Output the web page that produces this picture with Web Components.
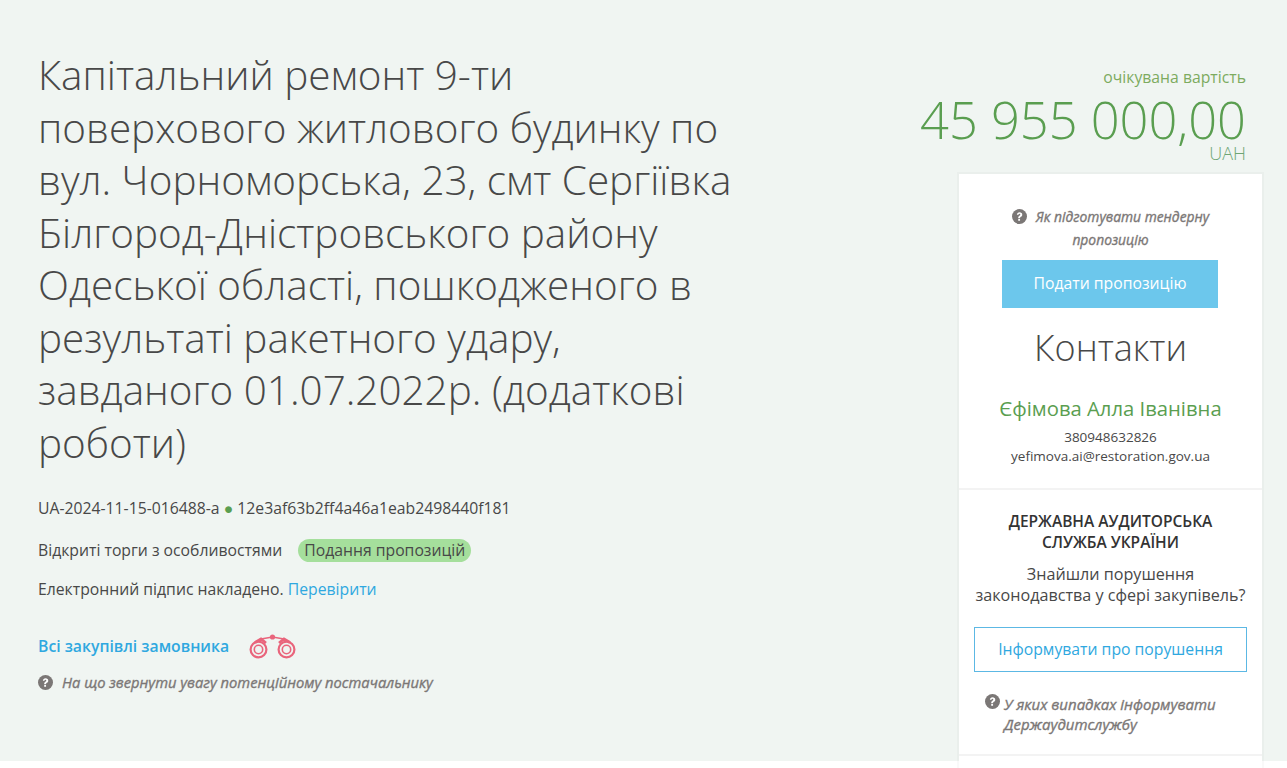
<!DOCTYPE html>
<html lang="uk">
<head>
<meta charset="utf-8">
<title>Тендер</title>
<style>
    html, body {
        margin: 0;
        height: 768px;
        overflow: hidden;
        background: #fff;
        font-family: "Open Sans", "Noto Sans", sans-serif;
        color: #484848;
    }
</style>
</head>
<body>
<tender-page>
    <tender-summary slot="left"></tender-summary>
    <price-box slot="right" amount="45 955 000,00" currency="UAH"></price-box>
    <side-card slot="right"></side-card>
</tender-page>

<script>
// question mark icon, used by every hint
const HELP_ICON = `<svg viewBox="0 0 24 24" width="15" height="15" aria-hidden="true"><circle cx="12" cy="12" r="12" fill="currentColor"/><path d="M7.800 9.300C8 6.800 9.700 5.300 12.100 5.300c2.500 0 4.300 1.500 4.300 3.700 0 1.500-.8 2.500-2.100 3.300-1.100.7-1.400 1.200-1.400 2.300h-3c-.1-1.900.5-3 1.900-3.900 1-.7 1.500-1.100 1.500-1.800 0-.8-.6-1.300-1.400-1.300-1 0-1.400.6-1.500 1.700z" fill="#fff"/><rect x="9.900" y="15.800" width="3" height="3" rx=".5" fill="#fff"/></svg>`;

class HelpHint extends HTMLElement {
    constructor() {
        super();
        this.attachShadow({ mode: 'open' });
        this.shadowRoot.innerHTML = `
        <style>
            :host {
                display: block;
                font-size: var(--hint-size, 14.72px);
                font-style: italic;
                font-weight: 400;
                -webkit-text-stroke: 0.35px currentColor;
                color: #7b7776;
                line-height: var(--hint-line, 24px);
            }
            .icon {
                display: inline-block;
                vertical-align: -2px;
                line-height: 0;
                margin-right: 9px;
            }
            /* icon stays on its own, text hangs next to it */
            :host([hanging]) {
                display: flex;
                line-height: 20px;
            }
            :host([hanging]) .icon { margin: 0 4px 0 0; height: 15px; }
        </style>
        <span class="icon">${HELP_ICON}</span><span><slot></slot></span>`;
    }
}
customElements.define('help-hint', HelpHint);

class TenderPage extends HTMLElement {
    constructor() {
        super();
        this.attachShadow({ mode: 'open' });
        this.shadowRoot.innerHTML = `
        <style>
            :host {
                display: flex;
                justify-content: space-between;
                height: 761px;
                background: #f0f5f2;
                box-sizing: border-box;
                padding: 49px 25px 0 38px;
            }
            .left { width: 706px; }
            .right {
                width: 303px;
                display: flex;
                flex-direction: column;
            }
        </style>
        <div class="left"><slot name="left"></slot></div>
        <div class="right"><slot name="right"></slot></div>`;
    }
}
customElements.define('tender-page', TenderPage);

class TenderSummary extends HTMLElement {
    constructor() {
        super();
        this.attachShadow({ mode: 'open' });
        this.shadowRoot.innerHTML = `
        <style>
            :host { display: block; font-size: 15.75px; }
            h1 {
                margin: 0 0 27px;
                font-size: 40.45px;
                font-weight: 300;
                line-height: 52.5px;
                color: #484848;
            }
            .row { line-height: 24px; }
            .ids { margin-bottom: 18px; }
            .dot { color: #5a9e50; }
            .kind {
                display: flex;
                align-items: center;
                gap: 16px;
                margin-bottom: 15px;
            }
            .status {
                background: #a5df9c;
                border-radius: 12px;
                padding: 0 6px;
                line-height: 23px;
            }
            a { color: #2fa8e0; text-decoration: none; }
            .buyer {
                display: flex;
                align-items: flex-start;
                gap: 20px;
                margin-top: 33px;
                margin-bottom: 10px;
                font-weight: 600;
            }
            .buyer svg { display: block; }
        </style>
        <h1>Капітальний ремонт 9-ти поверхового житлового будинку по вул. Чорноморська, 23, смт Сергіївка Білгород-Дністровського району Одеської області, пошкодженого в результаті ракетного удару, завданого 01.07.2022р. (додаткові роботи)</h1>
        <div class="row ids">UA-2024-11-15-016488-a <span class="dot">●</span> 12e3af63b2ff4a46a1eab2498440f181</div>
        <div class="row kind"><span>Відкриті торги з особливостями</span><span class="status">Подання пропозицій</span></div>
        <div class="row">Електронний підпис накладено. <a href="#">Перевірити</a></div>
        <div class="row buyer">
            <a href="#">Всі закупівлі замовника</a>
            <svg width="47" height="26" viewBox="0 0 47 26" fill="none" stroke="#e9657c" aria-hidden="true">
                <circle cx="9.500" cy="15.500" r="7.900" stroke-width="2.200"/>
                <circle cx="9.500" cy="15.500" r="4.200" stroke-width="1.600"/>
                <circle cx="37.500" cy="15.500" r="7.900" stroke-width="2.200"/>
                <circle cx="37.500" cy="15.500" r="4.200" stroke-width="1.600"/>
                <path d="M6 8.500 12 5 17 9M41 8.500 35 5 30 9" stroke-width="2.800"/>
                <path d="M12 5 23.500 3 35 5" stroke-width="1.500"/>
                <circle cx="23.500" cy="3" r="2.600" fill="#e9657c" stroke="none"/>
            </svg>
        </div>
        <help-hint>На що звернути увагу потенційному постачальнику</help-hint>`;
    }
}
customElements.define('tender-summary', TenderSummary);

class PriceBox extends HTMLElement {
    constructor() {
        super();
        this.attachShadow({ mode: 'open' });
        this.shadowRoot.innerHTML = `
        <style>
            :host {
                display: block;
                flex: none;
                text-align: right;
                padding-right: 16px;
                margin-left: -80px;
                color: #5a9e50;
                white-space: nowrap;
            }
            .label { font-size: 15.75px; line-height: 24px; margin-top: 16px; color: #7dab5f; }
            .amount { font-size: 50.6px; font-weight: 300; line-height: 50px; margin-top: 6px; }
            .currency { font-size: 18px; font-weight: 300; line-height: 14px; margin-top: 1px; color: #6ea574; }
        </style>
        <div class="label">очікувана вартість</div>
        <div class="amount">${this.getAttribute('amount')}</div>
        <div class="currency">${this.getAttribute('currency')}</div>`;
    }
}
customElements.define('price-box', PriceBox);

class SideCard extends HTMLElement {
    constructor() {
        super();
        this.attachShadow({ mode: 'open' });
        this.shadowRoot.innerHTML = `
        <style>
            :host {
                display: block;
                flex: none;
                margin-top: 14px;
                background: #fff;
                box-shadow: 0 0 0 2px rgba(0, 0, 0, 0.025);
                text-align: center;
                font-size: 13.5px;
                height: 594px;
            }
            section { padding: 0 15px; border-bottom: 2px solid #f3f3f3; }
            .top { padding-top: 31px; padding-bottom: 22px; }
            .top help-hint { padding: 0 30px; --hint-size: 13.85px; --hint-line: 23px; }
            .btn-main {
                display: block;
                width: 216px;
                height: 48px;
                line-height: 47px;
                margin: 9px 0 0 28px;
                background: #6cc7ec;
                color: #fff;
                font-size: 15.75px;
                text-decoration: none;
            }
            h2 {
                margin: 15px 0 0;
                font-size: 36px;
                font-weight: 300;
                line-height: 50px;
                color: #484848;
            }
            .person {
                margin-top: 21px;
                font-size: 20.25px;
                line-height: 28px;
                color: #5a9e50;
            }
            .contact { line-height: 19px; margin-top: 6px; color: #484848; }
            .audit { padding-top: 21px; padding-bottom: 20px; }
            .audit h3 {
                margin: 0;
                font-size: 15.5px;
                font-weight: 600;
                line-height: 21px;
                color: #333;
            }
            .audit p {
                margin: 11px 0 0;
                font-size: 16.15px;
                line-height: 21px;
                color: #484848;
            }
            .btn-outline {
                display: block;
                height: 43px;
                line-height: 43px;
                margin-top: 21px;
                border: 1px solid #5cb8e4;
                color: #2fa8e0;
                font-size: 15.75px;
                text-decoration: none;
            }
            .audit help-hint {
                --hint-size: 15px;
                margin: 22px 0 0 11px;
                text-align: left;
            }
        </style>
        <section class="top">
            <help-hint>Як підготувати тендерну пропозицію</help-hint>
            <a class="btn-main" href="#">Подати пропозицію</a>
            <h2>Контакти</h2>
            <div class="person">Єфімова Алла Іванівна</div>
            <div class="contact">380948632826<br>yefimova.ai@restoration.gov.ua</div>
        </section>
        <section class="audit">
            <h3>ДЕРЖАВНА АУДИТОРСЬКА<br>СЛУЖБА УКРАЇНИ</h3>
            <p>Знайшли порушення законодавства у сфері закупівель?</p>
            <a class="btn-outline" href="#">Інформувати про порушення</a>
            <help-hint hanging>У яких випадках інформувати Держаудитслужбу</help-hint>
        </section>`;
    }
}
customElements.define('side-card', SideCard);
</script>
</body>
</html>
